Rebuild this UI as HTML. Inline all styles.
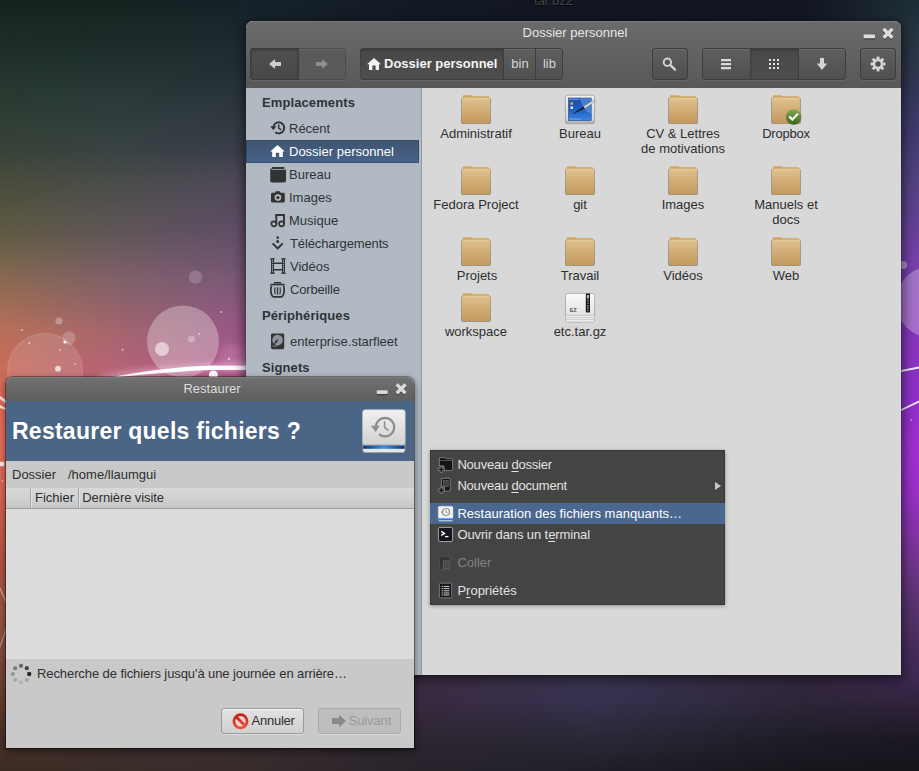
<!DOCTYPE html>
<html lang="fr">
<head>
<meta charset="utf-8">
<title>Dossier personnel</title>
<style>
*{box-sizing:border-box;margin:0;padding:0}
html,body{width:919px;height:771px;overflow:hidden;background:#1a1a24}
body{font-family:"Liberation Sans",sans-serif;font-size:13px;color:#2e2e2e;position:relative}
.abs{position:absolute}
/* ---------- wallpaper ---------- */
#wall{position:absolute;left:0;top:0;width:919px;height:771px;overflow:hidden}
#wall .l{position:absolute;left:0;top:0;width:919px;height:771px}
/* ---------- nautilus ---------- */
#naut{position:absolute;left:246px;top:21px;width:655px;height:654px;border-radius:7px 7px 0 0;background:#d8d8d8;box-shadow:0 2px 12px 2px rgba(0,0,0,.55),0 0 1px rgba(0,0,0,.8)}
#naut .head{position:absolute;left:0;top:0;width:655px;height:67px;border-radius:7px 7px 0 0;background:linear-gradient(#6a6a6a 0,#646464 25px,#585858 66px,#454545 67px);border-top:1px solid #7a7a7a}
#naut .title{position:absolute;left:1px;top:4px;width:656px;text-align:center;color:#e6e6e6;font-size:13px;line-height:16px;letter-spacing:0}
.tb{position:absolute;top:27px;height:32px;border:1px solid #3e3e3e;border-radius:3px;background:linear-gradient(#5e5e5e,#505050);box-shadow:inset 0 1px 0 rgba(255,255,255,.08),0 1px 0 rgba(255,255,255,.08)}
.tb .seg{position:absolute;top:0;height:30px;border-left:1px solid #3e3e3e}
.tb .on{background:linear-gradient(#484848,#4e4e4e);box-shadow:inset 0 1px 2px rgba(0,0,0,.3)}
.side{position:absolute;left:0;top:67px;width:175px;height:587px;background:#b1bac3}
.side .gut{position:absolute;left:172px;top:0;width:3px;height:587px;background:#98a2ad}
.side h3{position:absolute;left:16px;font-size:13px;font-weight:bold;color:#2e3338;line-height:16px;letter-spacing:.1px}
.side .it{position:absolute;left:0;width:173px;height:23px;line-height:23px;padding-left:44px;color:#2e3338;letter-spacing:0;white-space:nowrap}
.side .it.sel{background:linear-gradient(#3f5470,#47638a);color:#fff;box-shadow:inset 0 0 0 1px rgba(40,60,90,.45)}
.side .it svg{position:absolute;left:24px;top:3px;width:17px;height:17px}
.content{position:absolute;left:175px;top:67px;width:480px;height:587px;background:#d8d8d8;border-left:1px solid #999}
.ic{position:absolute;width:104px;text-align:center;line-height:15px;color:#2e2e2e;letter-spacing:0}
.ic svg{display:block;margin:0 auto 1px auto;position:relative;left:.5px}
#menu{position:absolute;left:430px;top:450px;width:295px;height:154.6px;background:#444;box-shadow:inset 0 0 0 1px rgba(40,40,40,.45),0 1px 4px rgba(0,0,0,.35)}
.mi{position:absolute;left:0;width:295px;height:21px;line-height:21px;padding-left:27.4px;color:#e2e2e2;white-space:nowrap;letter-spacing:0}
.mi u{text-decoration:underline;text-underline-offset:1.5px}
.mi svg{position:absolute;left:7px;top:2px;width:17px;height:17px}
.mi svg.arr{left:284px;top:6px;width:8px;height:10px}
.mi.hl{background:#4a688f;color:#fff}
.mi.dis{color:#828282}
.sep{position:absolute;left:21px;width:250px;height:2px;border-top:1px solid #3f3f3f;border-bottom:1px solid #484848}
#dlg{position:absolute;left:6px;top:377px;width:408px;height:370.5px;border-radius:7px 7px 0 0;background:#c9c9c9;box-shadow:0 3px 9px rgba(0,0,0,.55),0 0 0 1px rgba(0,0,0,.35)}
#dlg .dt{position:absolute;left:0;top:0;width:408px;height:24px;border-radius:7px 7px 0 0;background:linear-gradient(#707070,#5e5e5e);border-top:1px solid #7c7c7c}
#dlg .dtitle{position:absolute;left:2px;top:4px;width:408px;text-align:center;color:#dcdcdc;line-height:16px}
#dlg .ban{position:absolute;left:0;top:24px;width:408px;height:60px;background:#4a6586}
#dlg .big{position:absolute;left:6px;top:38.6px;color:#fff;font-weight:bold;font-size:23px;line-height:30px;white-space:nowrap;letter-spacing:.25px}
#dlg .th{position:absolute;left:0;top:111px;width:408px;height:21px;background:linear-gradient(#d8d8d8 0,#d2d2d2 45%,#c6c6c6 100%);border-bottom:1px solid #9c9c9c;color:#2e2e2e}
#dlg .cs{position:absolute;top:0;width:2px;height:20px;border-left:1px solid #a6a6a6;border-right:1px solid #e2e2e2}
#dlg .tbody{position:absolute;left:0;top:132px;width:408px;height:150px;background:#dcdcdc}
.btn{position:absolute;top:331px;height:26px;border:1px solid #9a9a9a;border-radius:3px;background:linear-gradient(#e2e2e2,#d0d0d0);box-shadow:0 1px 0 rgba(255,255,255,.4),inset 0 1px 0 rgba(255,255,255,.6)}
.btn.off{background:#bebebe;border-color:#aaa;box-shadow:0 1px 0 rgba(255,255,255,.3)}
</style>
</head>
<body>
<div id="wall">
 <div class="l" style="background:linear-gradient(to bottom,#16221f 0,#1f2f29 50px,#2a3b32 100px,#394338 150px,#494c3c 180px,#5e5a42 230px,#8a6a50 280px,#b87058 330px,#cc6c5a 375px,#e46e5c 400px,#ec705e 450px,#d86654 500px,#b65644 560px,#9a5644 620px,#724438 680px,#50342a 730px,#3c2c24 771px)"></div>
 <div class="l" style="background:linear-gradient(to bottom,#16221f 0,#1e2e2c 50px,#2b3a3a 100px,#394344 150px,#494c4a 180px,#5e5558 230px,#80606a 280px,#a2656f 330px,#b86278 375px,#b85a70 450px,#a05060 520px,#704050 620px,#4a3436 700px,#3a2d2a 771px);-webkit-mask-image:linear-gradient(to right,transparent 0px,#000 123px);mask-image:linear-gradient(to right,transparent 0px,#000 123px)"></div>
 <div class="l" style="background:linear-gradient(to bottom,#15222a 0,#1e2c30 50px,#2b353b 100px,#3a3e4a 150px,#4e4858 180px,#5f4e68 230px,#7a5878 280px,#985888 330px,#aa568c 375px,#a04c88 450px,#7a4070 550px,#503458 640px,#3e2e40 700px,#3a2e30 745px,#382c2c 771px);-webkit-mask-image:linear-gradient(to right,transparent 123px,#000 246px);mask-image:linear-gradient(to right,transparent 123px,#000 246px)"></div>
 <div class="l" style="background:linear-gradient(to bottom,#131a26 0,#151b28 21px,#2a2a40 100px,#4a3a70 300px,#5a3a80 500px,#3e3050 660px,#3c2e44 675px,#3a2a42 700px,#2c2630 740px,#28232b 771px);-webkit-mask-image:linear-gradient(to right,transparent 246px,#000 414px);mask-image:linear-gradient(to right,transparent 246px,#000 414px)"></div>
 <div class="l" style="background:linear-gradient(to bottom,#121420 0,#141826 21px,#2a2a40 100px,#4a3a70 300px,#5a3a80 500px,#3e3050 660px,#3a3450 675px,#363250 700px,#2a2836 740px,#201f28 771px);-webkit-mask-image:linear-gradient(to right,transparent 414px,#000 600px);mask-image:linear-gradient(to right,transparent 414px,#000 600px)"></div>
 <div class="l" style="background:linear-gradient(to bottom,#121422 0,#141826 21px,#2a2a40 100px,#4a3a70 300px,#5a3a80 500px,#3e3050 660px,#34283f 675px,#2e2639 700px,#1e1c26 740px,#17161c 771px);-webkit-mask-image:linear-gradient(to right,transparent 600px,#000 800px);mask-image:linear-gradient(to right,transparent 600px,#000 800px)"></div>
 <div class="l" style="background:linear-gradient(to bottom,#1d2d36 0,#253440 30px,#2e364b 70px,#36375c 100px,#3f3a6c 130px,#524280 180px,#604292 220px,#7640aa 260px,#8436b8 320px,#9030c8 400px,#a030d0 450px,#9a30c8 490px,#7a3498 550px,#5a3570 600px,#3c2850 680px,#32243f 700px,#1c1822 740px,#15141a 771px);-webkit-mask-image:linear-gradient(to right,transparent 800px,#000 915px);mask-image:linear-gradient(to right,transparent 800px,#000 915px)"></div>


 <svg class="l" width="919" height="771" viewBox="0 0 919 771">
  <defs>
   <filter id="bl1" x="-20%" y="-300%" width="140%" height="700%"><feGaussianBlur stdDeviation="3"/></filter>
   <filter id="bl0" x="-20%" y="-20%" width="140%" height="140%"><feGaussianBlur stdDeviation=".5"/></filter>
  </defs>
  <g fill="#fff">
   <circle cx="183" cy="341.5" r="36" fill-opacity=".3"/>
   <circle cx="45" cy="371" r="37.5" fill-opacity=".12" stroke="#fff" stroke-opacity=".1" stroke-width="1.5"/>
   <circle cx="195.4" cy="277" r="6.7" fill-opacity=".18"/>
   <circle cx="59" cy="321" r="3.5" fill-opacity=".3"/>
   <circle cx="69" cy="338" r="6.7" fill-opacity=".2"/>
   <circle cx="162" cy="349" r="7" fill-opacity=".55"/>
   <circle cx="191.4" cy="339" r="3.5" fill-opacity=".3"/>
   <circle cx="58" cy="368.7" r="3" fill-opacity=".7"/>
   <circle cx="213.4" cy="375" r="4.5" fill-opacity="1"/>
   <g filter="url(#bl0)">
   <circle cx="65" cy="342" r="1.6" fill-opacity=".9"/>
   <circle cx="22" cy="330" r="1" fill-opacity=".6"/>
   <circle cx="29.4" cy="343" r="1" fill-opacity=".6"/>
   <circle cx="122.6" cy="349.7" r="1" fill-opacity=".6"/>
   <circle cx="221" cy="312" r="1" fill-opacity=".6"/>
   <circle cx="199" cy="334" r="1" fill-opacity=".6"/>
   <circle cx="229" cy="359" r="1.2" fill-opacity=".6"/>
   <circle cx="60" cy="350" r="1" fill-opacity=".5"/>
   <circle cx="75" cy="364" r="1" fill-opacity=".5"/>
   </g>
  </g>
  <path d="M100 380 Q160 368 250 366" fill="none" stroke="#ffd0f0" stroke-opacity=".5" stroke-width="7" filter="url(#bl1)"/>
  <path d="M110 377.4 C140 372 180 366 215 365.6 L250 365.8 L250 370 L215 370 C185 370.4 150 374 110 378Z" fill="#fff"/><circle cx="232" cy="358" r="14" fill="#ffc8f0" fill-opacity=".18" filter="url(#bl1)"/>
  <!-- right side -->
  <circle cx="903" cy="265" r="4" fill="#fff" fill-opacity=".4"/>
  <circle cx="932" cy="302" r="36" fill="#fff" fill-opacity=".28"/>
  <path d="M896 371 L919 366.5 L919 368.5 L896 373Z" fill="#fff" fill-opacity=".9"/>
  <path d="M896 411.5 L919 400.5 L919 402.5 L896 413.5Z" fill="#fff" fill-opacity=".9"/>
  <circle cx="911" cy="420" r=".8" fill="#fff" fill-opacity=".7"/>
  <!-- left strip -->
  <path d="M0 396 L6 400 L6 404 L0 399Z M0 405 L6 408 L6 410 L0 408Z" fill="#fff" fill-opacity=".85"/>
  <circle cx="2" cy="464" r="2.5" fill="#fff" fill-opacity=".9"/>
  <circle cx="2.5" cy="481" r=".8" fill="#fff" fill-opacity=".8"/>
  <path d="M0 587 L6 600 L6 603 L0 590Z" fill="#fff" fill-opacity=".5"/>
  <path d="M0 645 L6 628 L6 631 L0 648Z" fill="#fff" fill-opacity=".45"/>
 </svg>
</div>
<div class="abs" style="left:534px;top:-7px;color:#474747;font-size:13px;line-height:15px;text-shadow:0 1px 1px #000">tar.bz2</div>

<div id="naut">
 <div class="head"></div>
 <div class="title">Dossier personnel</div>
<!--TOOLBAR-->
 <!-- window buttons -->
 <svg class="abs" style="left:616px;top:5px" width="36" height="16" viewBox="0 0 36 16">
  <rect x="1.6" y="9.4" width="11.4" height="4" rx=".9" fill="#2a2a2a" fill-opacity=".65"/>
  <rect x="1.6" y="8.4" width="11.4" height="3.8" rx=".8" fill="#dcdcdc"/>
  <g transform="translate(26 8.3)" fill="#2a2a2a" fill-opacity=".65"><rect x="-6.3" y="-1.75" width="12.6" height="3.5" rx=".5" transform="rotate(45)"/><rect x="-6.3" y="-1.75" width="12.6" height="3.5" rx=".5" transform="rotate(-45)"/></g>
  <g transform="translate(26 7.3)" fill="#dcdcdc"><rect x="-6.3" y="-1.75" width="12.6" height="3.5" rx=".5" transform="rotate(45)"/><rect x="-6.3" y="-1.75" width="12.6" height="3.5" rx=".5" transform="rotate(-45)"/></g>
 </svg>
 <!-- back / forward -->
 <div class="tb" style="left:4px;width:96px;background:#5a5a5a;border-color:#4c4c4c">
  <div class="seg on" style="left:-1px;width:49px;border:1px solid #3c3c3c;top:-1px;height:32px;border-radius:3px 0 0 3px;background:linear-gradient(#4f4f4f,#484848)"></div>
  <svg class="abs" style="left:17px;top:9px" width="14" height="12" viewBox="0 0 14 12"><path d="M1 6 L7 1 L7 4 L13 4 L13 8 L7 8 L7 11Z" fill="#cdcdcd"/></svg>
  <svg class="abs" style="left:64px;top:9px" width="14" height="12" viewBox="0 0 14 12"><path d="M13 6 L7 1 L7 4 L1 4 L1 8 L7 8 L7 11Z" fill="#8e8e8e"/></svg>
 </div>
 <!-- path bar -->
 <div class="tb" style="left:114px;width:203px">
  <div class="seg on" style="left:-1px;width:144px;border-left:0;border-radius:3px 0 0 3px"></div>
  <svg class="abs" style="left:5px;top:8px" width="16" height="14" viewBox="0 0 16 14"><path d="M8 1 L15 7.2 L13 7.2 L13 13 L9.6 13 L9.6 8.6 L6.4 8.6 L6.4 13 L3 13 L3 7.2 L1 7.2Z" fill="#f2f2f2"/></svg>
  <div class="abs" style="left:23px;top:0;line-height:29px;color:#f4f4f4;font-weight:bold;font-size:13px;letter-spacing:0;white-space:nowrap">Dossier personnel</div>
  <div class="seg" style="left:142px;width:33px"></div>
  <div class="abs" style="left:143px;width:32px;top:0;line-height:29px;color:#d6d6d6;text-align:center">bin</div>
  <div class="seg" style="left:174px;width:28px"></div>
  <div class="abs" style="left:175px;width:27px;top:0;line-height:29px;color:#d6d6d6;text-align:center">lib</div>
 </div>
 <!-- search -->
 <div class="tb" style="left:406px;width:36px">
  <svg class="abs" style="left:9px;top:7px" width="18" height="18" viewBox="0 0 18 18"><circle cx="5.4" cy="6.2" r="3.7" fill="none" stroke="#d4d4d4" stroke-width="1.9"/><path d="M8.4 9.2 L13 13.6" stroke="#d4d4d4" stroke-width="2.3" stroke-linecap="round"/></svg>
 </div>
 <!-- view group -->
 <div class="tb" style="left:456px;width:144px">
  <div class="seg on" style="left:47px;width:49px"></div>
  <div class="seg" style="left:95px;width:1px"></div>
  <svg class="abs" style="left:17px;top:9px" width="12" height="12" viewBox="0 0 12 12"><path d="M1 1h10v2.2H1zM1 5h10v2.2H1zM1 9h10v2.2H1z" fill="#dadada"/></svg>
  <svg class="abs" style="left:65px;top:9px" width="12" height="12" viewBox="0 0 12 12"><path d="M1 1h2v2H1zM5 1h2v2H5zM9 1h2v2H9zM1 5h2v2H1zM5 5h2v2H5zM9 5h2v2H9zM1 9h2v2H1zM5 9h2v2H5zM9 9h2v2H9z" fill="#e6e6e6"/></svg>
  <svg class="abs" style="left:112px;top:8px" width="14" height="14" viewBox="0 0 14 14"><path d="M5 1 L9 1 L9 6.5 L12.2 6.5 L7 13 L1.8 6.5 L5 6.5Z" fill="#d4d4d4"/></svg>
 </div>
 <!-- gear -->
 <div class="tb" style="left:614px;width:36px">
  <svg class="abs" style="left:9px;top:7px" width="16" height="16" viewBox="-8 -8 16 16"><g fill="#d4d4d4"><circle r="5.2"/><rect x="-1.5" y="-7.4" width="3" height="14.8"/><rect x="-1.5" y="-7.4" width="3" height="14.8" transform="rotate(45)"/><rect x="-1.5" y="-7.4" width="3" height="14.8" transform="rotate(90)"/><rect x="-1.5" y="-7.4" width="3" height="14.8" transform="rotate(135)"/></g><circle r="2.7" fill="#4f4f4f"/></svg>
 </div>
<!--/TOOLBAR-->
 <div class="side">
<!--SIDE-->
  <h3 style="top:7px">Emplacements</h3>
  <div class="it" style="top:29px;padding-left:43px"><svg viewBox="0 0 17 17"><path d="M8.9 2.2 A5.6 5.6 0 1 1 5.2 12.2" fill="none" stroke="#333" stroke-width="1.9"/><path d="M3.3 7.8 A5.6 5.6 0 0 1 8.9 2.2" fill="none" stroke="#333" stroke-width="1.9"/><path d="M.3 6.2 L6.4 6.2 L3.3 10.3Z" fill="#333"/><path d="M8.7 4.6 V8.2 L11.2 9.8" fill="none" stroke="#333" stroke-width="1.5"/></svg>Récent</div>
  <div class="it sel" style="top:52px;padding-left:43px"><svg viewBox="0 0 17 17"><path d="M7.5 2 L14.8 8.6 L12.8 8.6 L12.8 14 L9.2 14 L9.2 9.8 L5.8 9.8 L5.8 14 L2.2 14 L2.2 8.6 L.2 8.6Z" fill="#fff"/></svg>Dossier personnel</div>
  <div class="it" style="top:75px;padding-left:43px"><svg viewBox="0 0 17 17"><rect x="1.8" y=".9" width="12.8" height="2.2" rx="1" fill="#333"/><rect x=".2" y="3.8" width="15.8" height="12.8" rx="1.8" fill="#333"/><path d="M1 2.6 V5 M15.2 3.4 V5" stroke="#333" stroke-width="1.4"/></svg>Bureau</div>
  <div class="it" style="top:98px;padding-left:43px"><svg viewBox="0 0 17 17"><path d="M5.6 2.2 H10 L10.6 3.8 H13.4 Q14.8 3.8 14.8 5.2 V12.2 Q14.8 13.6 13.4 13.6 H2.4 Q1 13.6 1 12.2 V5.2 Q1 3.8 2.4 3.8 H5Z" fill="#333"/><circle cx="7.9" cy="8.6" r="3.3" fill="#b1bac3"/><circle cx="7.9" cy="8.6" r="1.6" fill="#333"/></svg>Images</div>
  <div class="it" style="top:121px;padding-left:43px"><svg viewBox="0 0 17 17"><path d="M5.4 3 H14 V12" fill="none" stroke="#333" stroke-width="1.9"/><path d="M6.3 3 V12" fill="none" stroke="#333" stroke-width="1.9"/><circle cx="3.9" cy="11.8" r="2.5" fill="none" stroke="#333" stroke-width="1.8"/><circle cx="11.6" cy="11.8" r="2.5" fill="none" stroke="#333" stroke-width="1.8"/></svg>Musique</div>
  <div class="it" style="top:144px"><svg viewBox="0 0 17 17"><circle cx="7.7" cy="2.6" r="1.3" fill="#333"/><circle cx="7.7" cy="6.6" r="1.5" fill="#333"/><path d="M2.6 8.4 L7.7 13.4 L12.8 8.4" fill="none" stroke="#333" stroke-width="2"/></svg><span style="letter-spacing:-.13px">Téléchargements</span></div>
  <div class="it" style="top:167px"><svg viewBox="0 0 17 17"><path d="M1 .4 H4 V15.6 H1Z M12 .4 H15 V15.6 H12Z" fill="#333"/><path d="M4 5.2 H12 M4 11.8 H12" stroke="#333" stroke-width="1.6"/><path d="M2.5 1.6 V15" stroke="#b1bac3" stroke-width="1" stroke-dasharray="1.2 1"/><path d="M13.5 1.6 V15" stroke="#b1bac3" stroke-width="1" stroke-dasharray="1.2 1"/><path d="M0 .8 H5 M11 .8 H16 M0 15.3 H5 M11 15.3 H16" stroke="#333" stroke-width=".9"/></svg>Vidéos</div>
  <div class="it" style="top:190px"><svg viewBox="0 0 17 17"><path d="M4.2 1 H10.8 L11.8 2.6 H3.2Z" fill="#333"/><path d="M.2 2.8 H14.8 V4.4 H.2Z" fill="#333"/><path d="M1.4 5 Q0 10.5 2 14.6 Q2.6 15.8 4 15.8 H11 Q12.4 15.8 13 14.6 Q15 10.5 13.6 5" fill="none" stroke="#333" stroke-width="1.7"/><path d="M7.5 6.2 V13.6" stroke="#333" stroke-width="1.3"/><path d="M5 6.4 Q4.2 10 5.2 13.4 M10 6.4 Q10.8 10 9.8 13.4" fill="none" stroke="#333" stroke-width="1.2"/></svg><span style="letter-spacing:-.18px">Corbeille</span></div>
  <h3 style="top:220px">Périphériques</h3>
  <div class="it" style="top:242px"><svg viewBox="0 0 17 17"><rect x="1" y=".4" width="13.2" height="15.8" rx="1.4" fill="#333"/><circle cx="7.6" cy="7" r="5.3" fill="#8e959c"/><path d="M3.2 12.6 L5.6 7.8 L8.4 5.6 L7 9.2Z" fill="#333"/><path d="M2.6 13 A7 7 0 0 0 9 11.6" fill="none" stroke="#8e959c" stroke-width=".8"/></svg>enterprise.starfleet</div>
  <h3 style="top:272px">Signets</h3>
<!--/SIDE-->
 </div>
 <div class="content">
<!--ICONS-->
  <svg width="0" height="0" style="position:absolute"><defs>
   <linearGradient id="gfo" x1="0" y1="0" x2="0" y2="1"><stop offset="0" stop-color="#dec391"/><stop offset=".45" stop-color="#d2ae78"/><stop offset="1" stop-color="#c39a5d"/></linearGradient>
   <linearGradient id="gck" x1="0" y1="0" x2="0" y2="1"><stop offset="0" stop-color="#84a957"/><stop offset="1" stop-color="#3b6619"/></linearGradient>
   <linearGradient id="gfr" x1="0" y1="0" x2="0" y2="1"><stop offset="0" stop-color="#f2f2f2"/><stop offset="1" stop-color="#cfcfcf"/></linearGradient>
   <linearGradient id="gbl" x1="0" y1="0" x2="0" y2="1"><stop offset="0" stop-color="#1c4fae"/><stop offset=".5" stop-color="#1f5cc0"/><stop offset="1" stop-color="#3a86e0"/></linearGradient>
   <linearGradient id="gar" x1="0" y1="0" x2="0" y2="1"><stop offset="0" stop-color="#fafafa"/><stop offset="1" stop-color="#dcdcdc"/></linearGradient>
  </defs></svg>
  <div class="ic" style="left:2px;top:6px"><svg width="33" height="31" viewBox="0 0 33 31"><rect x="1" y="3.6" width="30" height="26.4" rx="2.6" fill="#5f584c" fill-opacity=".55"/><path d="M2.7 2.4 Q2.7 .9 4.2 .9 H10.8 Q11.5 .9 12 1.5 L12.7 2.3 H27.9 Q29.3 2.3 29.3 3.7 V8 H2.7Z" fill="#cea563"/><path d="M3.4 1.6 H11.2" stroke="#ddbb80" stroke-width=".7"/><rect x="1.7" y="3.8" width="28.6" height="25.5" rx="2.2" fill="url(#gfo)"/><path d="M3.4 4.4 H28.6" stroke="#e8d2a6" stroke-width=".8" stroke-opacity=".8"/></svg>Administratif</div>
  <div class="ic" style="left:106px;top:6px"><svg width="33" height="31" viewBox="0 0 33 31"><rect x="1.4" y="1.2" width="29.2" height="28.4" rx="2.4" fill="url(#gfr)" stroke="#9c9c9c" stroke-width=".8"/><rect x="1.6" y="26.6" width="28.8" height="3.2" rx="1.6" fill="#8a8a8a" fill-opacity=".35"/><rect x="4.6" y="4" width="22.6" height="22.4" fill="url(#gbl)" stroke="#1c3f8a" stroke-width=".6"/><path d="M15.5 4 L27.2 4 L27.2 20 Q20 18 15.5 4Z" fill="#7fb0ea" fill-opacity=".45"/><path d="M5 5.2 H15" stroke="#9fc0ee" stroke-width=".8"/><path d="M5.4 25 H17" stroke="#8fb6ee" stroke-width=".7"/><rect x="6.4" y="8.2" width="2.6" height="2.6" rx=".6" fill="#e8a93c"/><rect x="6.6" y="12.4" width="2.4" height="2.6" fill="#eee"/><path d="M7.8 20.4 L19.8 12.6 L20.8 14.2 Z" fill="#1b1b1b"/><path d="M19.6 12.6 L29.4 6.2 Q31.6 5.6 31.2 7.4 L20.8 14.4Z" fill="#e0e0e0" stroke="#777" stroke-width=".5"/><path d="M8 20.4 L19.6 12.8 L20.6 14.4 Z" fill="#222"/></svg>Bureau</div>
  <div class="ic" style="left:209px;top:6px"><svg width="33" height="31" viewBox="0 0 33 31"><rect x="1" y="3.6" width="30" height="26.4" rx="2.6" fill="#5f584c" fill-opacity=".55"/><path d="M2.7 2.4 Q2.7 .9 4.2 .9 H10.8 Q11.5 .9 12 1.5 L12.7 2.3 H27.9 Q29.3 2.3 29.3 3.7 V8 H2.7Z" fill="#cea563"/><path d="M3.4 1.6 H11.2" stroke="#ddbb80" stroke-width=".7"/><rect x="1.7" y="3.8" width="28.6" height="25.5" rx="2.2" fill="url(#gfo)"/><path d="M3.4 4.4 H28.6" stroke="#e8d2a6" stroke-width=".8" stroke-opacity=".8"/></svg>CV &amp; Lettres<br>de motivations</div>
  <div class="ic" style="left:312px;top:6px"><svg width="33" height="31" viewBox="0 0 33 31"><rect x="1" y="3.6" width="30" height="26.4" rx="2.6" fill="#5f584c" fill-opacity=".55"/><path d="M2.7 2.4 Q2.7 .9 4.2 .9 H10.8 Q11.5 .9 12 1.5 L12.7 2.3 H27.9 Q29.3 2.3 29.3 3.7 V8 H2.7Z" fill="#cea563"/><path d="M3.4 1.6 H11.2" stroke="#ddbb80" stroke-width=".7"/><rect x="1.7" y="3.8" width="28.6" height="25.5" rx="2.2" fill="url(#gfo)"/><path d="M3.4 4.4 H28.6" stroke="#e8d2a6" stroke-width=".8" stroke-opacity=".8"/><circle cx="23.6" cy="23" r="7.8" fill="url(#gck)"/><path d="M19.3 22.6 L22.4 25.6 L28 19.6" fill="none" stroke="#fff" stroke-width="2.1"/></svg><span style="letter-spacing:-.2px">Dropbox</span></div>
  <div class="ic" style="left:2px;top:77px"><svg width="33" height="31" viewBox="0 0 33 31"><rect x="1" y="3.6" width="30" height="26.4" rx="2.6" fill="#5f584c" fill-opacity=".55"/><path d="M2.7 2.4 Q2.7 .9 4.2 .9 H10.8 Q11.5 .9 12 1.5 L12.7 2.3 H27.9 Q29.3 2.3 29.3 3.7 V8 H2.7Z" fill="#cea563"/><path d="M3.4 1.6 H11.2" stroke="#ddbb80" stroke-width=".7"/><rect x="1.7" y="3.8" width="28.6" height="25.5" rx="2.2" fill="url(#gfo)"/><path d="M3.4 4.4 H28.6" stroke="#e8d2a6" stroke-width=".8" stroke-opacity=".8"/></svg>Fedora Project</div>
  <div class="ic" style="left:106px;top:77px"><svg width="33" height="31" viewBox="0 0 33 31"><rect x="1" y="3.6" width="30" height="26.4" rx="2.6" fill="#5f584c" fill-opacity=".55"/><path d="M2.7 2.4 Q2.7 .9 4.2 .9 H10.8 Q11.5 .9 12 1.5 L12.7 2.3 H27.9 Q29.3 2.3 29.3 3.7 V8 H2.7Z" fill="#cea563"/><path d="M3.4 1.6 H11.2" stroke="#ddbb80" stroke-width=".7"/><rect x="1.7" y="3.8" width="28.6" height="25.5" rx="2.2" fill="url(#gfo)"/><path d="M3.4 4.4 H28.6" stroke="#e8d2a6" stroke-width=".8" stroke-opacity=".8"/></svg>git</div>
  <div class="ic" style="left:209px;top:77px"><svg width="33" height="31" viewBox="0 0 33 31"><rect x="1" y="3.6" width="30" height="26.4" rx="2.6" fill="#5f584c" fill-opacity=".55"/><path d="M2.7 2.4 Q2.7 .9 4.2 .9 H10.8 Q11.5 .9 12 1.5 L12.7 2.3 H27.9 Q29.3 2.3 29.3 3.7 V8 H2.7Z" fill="#cea563"/><path d="M3.4 1.6 H11.2" stroke="#ddbb80" stroke-width=".7"/><rect x="1.7" y="3.8" width="28.6" height="25.5" rx="2.2" fill="url(#gfo)"/><path d="M3.4 4.4 H28.6" stroke="#e8d2a6" stroke-width=".8" stroke-opacity=".8"/></svg>Images</div>
  <div class="ic" style="left:312px;top:77px"><svg width="33" height="31" viewBox="0 0 33 31"><rect x="1" y="3.6" width="30" height="26.4" rx="2.6" fill="#5f584c" fill-opacity=".55"/><path d="M2.7 2.4 Q2.7 .9 4.2 .9 H10.8 Q11.5 .9 12 1.5 L12.7 2.3 H27.9 Q29.3 2.3 29.3 3.7 V8 H2.7Z" fill="#cea563"/><path d="M3.4 1.6 H11.2" stroke="#ddbb80" stroke-width=".7"/><rect x="1.7" y="3.8" width="28.6" height="25.5" rx="2.2" fill="url(#gfo)"/><path d="M3.4 4.4 H28.6" stroke="#e8d2a6" stroke-width=".8" stroke-opacity=".8"/></svg>Manuels et<br>docs</div>
  <div class="ic" style="left:2px;top:148px"><svg width="33" height="31" viewBox="0 0 33 31"><rect x="1" y="3.6" width="30" height="26.4" rx="2.6" fill="#5f584c" fill-opacity=".55"/><path d="M2.7 2.4 Q2.7 .9 4.2 .9 H10.8 Q11.5 .9 12 1.5 L12.7 2.3 H27.9 Q29.3 2.3 29.3 3.7 V8 H2.7Z" fill="#cea563"/><path d="M3.4 1.6 H11.2" stroke="#ddbb80" stroke-width=".7"/><rect x="1.7" y="3.8" width="28.6" height="25.5" rx="2.2" fill="url(#gfo)"/><path d="M3.4 4.4 H28.6" stroke="#e8d2a6" stroke-width=".8" stroke-opacity=".8"/></svg><span style="padding-left:2px">Projets</span></div>
  <div class="ic" style="left:106px;top:148px"><svg width="33" height="31" viewBox="0 0 33 31"><rect x="1" y="3.6" width="30" height="26.4" rx="2.6" fill="#5f584c" fill-opacity=".55"/><path d="M2.7 2.4 Q2.7 .9 4.2 .9 H10.8 Q11.5 .9 12 1.5 L12.7 2.3 H27.9 Q29.3 2.3 29.3 3.7 V8 H2.7Z" fill="#cea563"/><path d="M3.4 1.6 H11.2" stroke="#ddbb80" stroke-width=".7"/><rect x="1.7" y="3.8" width="28.6" height="25.5" rx="2.2" fill="url(#gfo)"/><path d="M3.4 4.4 H28.6" stroke="#e8d2a6" stroke-width=".8" stroke-opacity=".8"/></svg>Travail</div>
  <div class="ic" style="left:209px;top:148px"><svg width="33" height="31" viewBox="0 0 33 31"><rect x="1" y="3.6" width="30" height="26.4" rx="2.6" fill="#5f584c" fill-opacity=".55"/><path d="M2.7 2.4 Q2.7 .9 4.2 .9 H10.8 Q11.5 .9 12 1.5 L12.7 2.3 H27.9 Q29.3 2.3 29.3 3.7 V8 H2.7Z" fill="#cea563"/><path d="M3.4 1.6 H11.2" stroke="#ddbb80" stroke-width=".7"/><rect x="1.7" y="3.8" width="28.6" height="25.5" rx="2.2" fill="url(#gfo)"/><path d="M3.4 4.4 H28.6" stroke="#e8d2a6" stroke-width=".8" stroke-opacity=".8"/></svg>Vidéos</div>
  <div class="ic" style="left:312px;top:148px"><svg width="33" height="31" viewBox="0 0 33 31"><rect x="1" y="3.6" width="30" height="26.4" rx="2.6" fill="#5f584c" fill-opacity=".55"/><path d="M2.7 2.4 Q2.7 .9 4.2 .9 H10.8 Q11.5 .9 12 1.5 L12.7 2.3 H27.9 Q29.3 2.3 29.3 3.7 V8 H2.7Z" fill="#cea563"/><path d="M3.4 1.6 H11.2" stroke="#ddbb80" stroke-width=".7"/><rect x="1.7" y="3.8" width="28.6" height="25.5" rx="2.2" fill="url(#gfo)"/><path d="M3.4 4.4 H28.6" stroke="#e8d2a6" stroke-width=".8" stroke-opacity=".8"/></svg>Web</div>
  <div class="ic" style="left:2px;top:204px"><svg width="33" height="31" viewBox="0 0 33 31"><rect x="1" y="3.6" width="30" height="26.4" rx="2.6" fill="#5f584c" fill-opacity=".55"/><path d="M2.7 2.4 Q2.7 .9 4.2 .9 H10.8 Q11.5 .9 12 1.5 L12.7 2.3 H27.9 Q29.3 2.3 29.3 3.7 V8 H2.7Z" fill="#cea563"/><path d="M3.4 1.6 H11.2" stroke="#ddbb80" stroke-width=".7"/><rect x="1.7" y="3.8" width="28.6" height="25.5" rx="2.2" fill="url(#gfo)"/><path d="M3.4 4.4 H28.6" stroke="#e8d2a6" stroke-width=".8" stroke-opacity=".8"/></svg>workspace</div>
  <div class="ic" style="left:106px;top:204px"><svg width="33" height="31" viewBox="0 0 33 31"><rect x="1.5" y="1.4" width="29.2" height="28.6" rx="2.2" fill="url(#gar)" stroke="#a4a4a4" stroke-width=".8"/><rect x="1.9" y="23.4" width="28.4" height="6.2" rx="1.6" fill="#f4f4f4"/><path d="M2 23.4 H30.2 M2 25.6 H30.2 M2 27.7 H30.2" stroke="#b9b9b9" stroke-width=".8"/><rect x="21.8" y="1.6" width="4.2" height="19" rx=".8" fill="#161616"/><rect x="22.8" y="3" width="2.2" height="3.4" fill="#bdbdbd"/><path d="M23.9 7.6 V19.6" stroke="#9a9a9a" stroke-width="1.8" stroke-dasharray=".9 .9"/><text x="5.6" y="20.4" font-family="Liberation Mono, monospace" font-size="6" font-weight="bold" fill="#555">GZ</text></svg>etc.tar.gz</div>
<!--/ICONS-->
 </div>
</div>
<!--MENU-->
<div id="menu">
 <div class="mi" style="top:4px;letter-spacing:-.2px"><svg viewBox="0 0 17 17"><path d="M2.4 1.6 H8.4 L9.2 2.8 H14.6 Q15.6 2.8 15.6 3.8 V13.4 Q15.6 14.4 14.6 14.4 H7 V10 H2.4Z" fill="#141414" stroke="#8c8c8c" stroke-width=".8"/><path d="M2.4 4.6 H15.4" stroke="#6e6e6e" stroke-width=".7"/><path d="M3.2 10.4 H5.4 V12.4 H7.4 V14.6 H5.4 V16.6 H3.2 V14.6 H1.2 V12.4 H3.2Z" fill="#141414" stroke="#9a9a9a" stroke-width=".7"/></svg>Nouveau <u>d</u>ossier</div>
 <div class="mi" style="top:25px;letter-spacing:-.2px"><svg viewBox="0 0 17 17"><path d="M4.6 1.4 H12.2 Q13.2 1.4 13.2 2.4 V13 Q13.2 14 12.2 14 H7.4 V9.8 H4.6Z" fill="#141414" stroke="#8c8c8c" stroke-width=".8"/><rect x="6.6" y="3.4" width="4.6" height="6.4" fill="#444" stroke="#777" stroke-width=".5"/><path d="M3.2 10.2 H5.4 V12.2 H7.4 V14.4 H5.4 V16.4 H3.2 V14.4 H1.2 V12.2 H3.2Z" fill="#141414" stroke="#9a9a9a" stroke-width=".7"/></svg>Nouveau <u>d</u>ocument<svg class="arr" viewBox="0 0 8 10"><path d="M1 1 L7 5 L1 9Z" fill="#c8c8c8"/></svg></div>
 <div class="sep" style="top:49px"></div>
 <div class="mi hl" style="top:53px;letter-spacing:.02px"><svg viewBox="0 0 17 17"><rect x="1.2" y="11.4" width="14.8" height="5" rx="1.4" fill="#e9e9e9" stroke="#5b6f8c" stroke-width=".5"/><rect x="1.5" y="13" width="14.2" height="2.3" fill="#1f79ee"/><rect x="1.2" y="1.2" width="14.8" height="12" rx="1.4" fill="#f3f3f3" stroke="#c4c4c4" stroke-width=".5"/><circle cx="9" cy="7" r="3.5" fill="none" stroke="#909090" stroke-width="1.2"/><path d="M9 5 V7.2 L10.6 8" fill="none" stroke="#909090" stroke-width=".9"/><path d="M3.4 6.4 L6.8 6.4 L5.1 8.8Z" fill="#909090"/></svg>Restauration des fichiers manquants…</div>
 <div class="mi" style="top:74px;letter-spacing:-.11px"><svg viewBox="0 0 17 17"><rect x="1.4" y="1.4" width="14.2" height="14.2" rx="1.8" fill="#18141e" stroke="#b4b4b4" stroke-width=".9"/><path d="M4.2 5.4 L7.4 7.4 L4.2 9.4" fill="none" stroke="#fff" stroke-width="1.4"/><path d="M8 10.6 H11.4" stroke="#fff" stroke-width="1.3"/></svg>Ouvrir dans un t<u>e</u>rminal</div>
 <div class="sep" style="top:98px"></div>
 <div class="mi dis" style="top:102px"><svg viewBox="0 0 17 17"><path d="M3.4 2.6 H6 V1.8 H9.4 V2.6 H12 Q13 2.6 13 3.6 V14.6 Q13 15.6 12 15.6 H3.4 Q2.4 15.6 2.4 14.6 V3.6 Q2.4 2.6 3.4 2.6Z" fill="#343434" stroke="#575757" stroke-width=".8"/><rect x="6.6" y="6.8" width="5.4" height="7.6" fill="#4a4a4a" stroke="#666" stroke-width=".7"/></svg>Coller</div>
 <div class="sep" style="top:126px"></div>
 <div class="mi" style="top:130px"><svg viewBox="0 0 17 17"><rect x="2.4" y="1.2" width="12.2" height="14.6" rx="1.2" fill="#141414" stroke="#8a8a8a" stroke-width=".8"/><path d="M4.6 4.4 H12.4 M4.6 6.6 H12.4 M4.6 8.8 H12.4 M4.6 11 H12.4 M4.6 13 H12.4" stroke="#e6e6e6" stroke-width=".9"/><path d="M6.4 3.8 V13.6" stroke="#141414" stroke-width=".7"/></svg>P<u>r</u>opriétés</div>
</div>
<!--/MENU-->
<!--DIALOG-->
<div id="dlg">
 <div class="dt"></div>
 <div class="dtitle">Restaurer</div>
 <svg class="abs" style="left:369px;top:5px" width="36" height="16" viewBox="0 0 36 16">
  <rect x="1.7" y="9.2" width="11" height="4" rx=".9" fill="#2a2a2a" fill-opacity=".65"/>
  <rect x="1.7" y="8.2" width="11" height="3.8" rx=".8" fill="#d8d8d8"/>
  <g transform="translate(26.1 7.8)" fill="#2a2a2a" fill-opacity=".65"><rect x="-6.3" y="-1.75" width="12.6" height="3.5" rx=".5" transform="rotate(45)"/><rect x="-6.3" y="-1.75" width="12.6" height="3.5" rx=".5" transform="rotate(-45)"/></g>
  <g transform="translate(26.1 6.8)" fill="#d8d8d8"><rect x="-6.3" y="-1.75" width="12.6" height="3.5" rx=".5" transform="rotate(45)"/><rect x="-6.3" y="-1.75" width="12.6" height="3.5" rx=".5" transform="rotate(-45)"/></g>
 </svg>
 <div class="ban"></div>
 <div class="big">Restaurer quels fichiers ?</div>
 <svg class="abs" style="left:355px;top:31px" width="46" height="46" viewBox="0 0 46 46">
  <defs><linearGradient id="gdi" x1="0" y1="0" x2="0" y2="1"><stop offset="0" stop-color="#f1f1f1"/><stop offset="1" stop-color="#d2d2d2"/></linearGradient>
  <linearGradient id="gdb" x1="0" y1="0" x2="1" y2="0"><stop offset="0" stop-color="#10306f"/><stop offset=".5" stop-color="#2f97fa"/><stop offset="1" stop-color="#10306f"/></linearGradient></defs>
  <rect x="1.6" y="34" width="42.6" height="10.8" rx="2.8" fill="#e6e6e6" stroke="#6f7f93" stroke-width=".8"/>
  <rect x="2.2" y="37.6" width="41.4" height="3.2" fill="url(#gdb)"/>
  <path d="M2.2 37.4 H43.6" stroke="#23355a" stroke-width=".8"/>
  <rect x="1.6" y="1.7" width="42.6" height="35.4" rx="2.6" fill="url(#gdi)" stroke="#c6c6c6" stroke-width=".6"/>
  <path d="M2.4 36.6 H43.4" stroke="#b4bcc8" stroke-width=".8"/>
  <path d="M24 10 A9.2 9.2 0 1 1 18 26.2" fill="none" stroke="#8f8f8f" stroke-width="2.3"/>
  <path d="M14.8 19.4 A9.2 9.2 0 0 1 24 10" fill="none" stroke="#8f8f8f" stroke-width="2.3"/>
  <path d="M10 17.8 L18.8 17.8 L14.6 24Z" fill="#8f8f8f"/>
  <path d="M23.6 13.2 V19.4 L27.4 22.6" fill="none" stroke="#8f8f8f" stroke-width="1.6"/>
 </svg>
 <div class="abs" style="left:6px;top:90px;line-height:16px;color:#2e2e2e">Dossier</div>
 <div class="abs" style="left:62px;top:90px;line-height:16px;color:#2e2e2e">/home/llaumgui</div>
 <div class="th">
  <div class="cs" style="left:24px"></div><div class="cs" style="left:72px"></div>
  <div class="abs" style="left:29px;top:-1px;line-height:21px">Fichier</div>
  <div class="abs" style="left:76.3px;top:-1px;line-height:21px;letter-spacing:-.1px">Dernière visite</div>
 </div>
 <div class="tbody"></div>
 <svg class="abs" style="left:4px;top:285.8px" width="22" height="22" viewBox="-11 -11 22 22">
  <circle cx="0" cy="-8.2" r="2.1" fill="#666"/><circle cx="5.8" cy="-5.8" r="2.1" fill="#444"/><circle cx="8.2" cy="0" r="2.2" fill="#2a2a2a"/><circle cx="5.8" cy="5.8" r="2.1" fill="#a6a6a6"/><circle cx="0" cy="8.2" r="2.1" fill="#b6b6b6"/><circle cx="-5.8" cy="5.8" r="2.1" fill="#a8a8a8"/><circle cx="-8.2" cy="0" r="2.1" fill="#979797"/><circle cx="-5.8" cy="-5.8" r="2.1" fill="#7c7c7c"/>
 </svg>
 <div class="abs" style="left:31px;top:289px;line-height:16px;color:#2e2e2e;white-space:nowrap;letter-spacing:-.09px">Recherche de fichiers jusqu'à une journée en arrière…</div>
 <div class="btn" style="left:215px;width:83px">
  <svg class="abs" style="left:9px;top:3px" width="19" height="19" viewBox="0 0 19 19"><defs><linearGradient id="grd" x1="0" y1="0" x2="0" y2="1"><stop offset="0" stop-color="#c8201c"/><stop offset="1" stop-color="#f0503a"/></linearGradient></defs><circle cx="9.5" cy="9.3" r="6.6" fill="#f2d4d0" stroke="url(#grd)" stroke-width="2.8"/><path d="M4.8 4.8 L14.2 13.8" stroke="url(#grd)" stroke-width="2.8"/></svg>
  <div class="abs" style="left:29.6px;top:0;line-height:24px;color:#2e2e2e;letter-spacing:-.25px">Annuler</div>
 </div>
 <div class="btn off" style="left:312px;width:83px">
  <svg class="abs" style="left:12px;top:5px" width="16" height="14" viewBox="0 0 16 14"><path d="M1 4 H8 V.8 L15 7 L8 13.2 V10 H1Z" fill="#8a8a8a"/></svg>
  <div class="abs" style="left:29.6px;top:0;line-height:24px;color:#9a9a9a;letter-spacing:-.1px">Suivant</div>
 </div>
</div>
<!--/DIALOG-->
</body>
</html>
